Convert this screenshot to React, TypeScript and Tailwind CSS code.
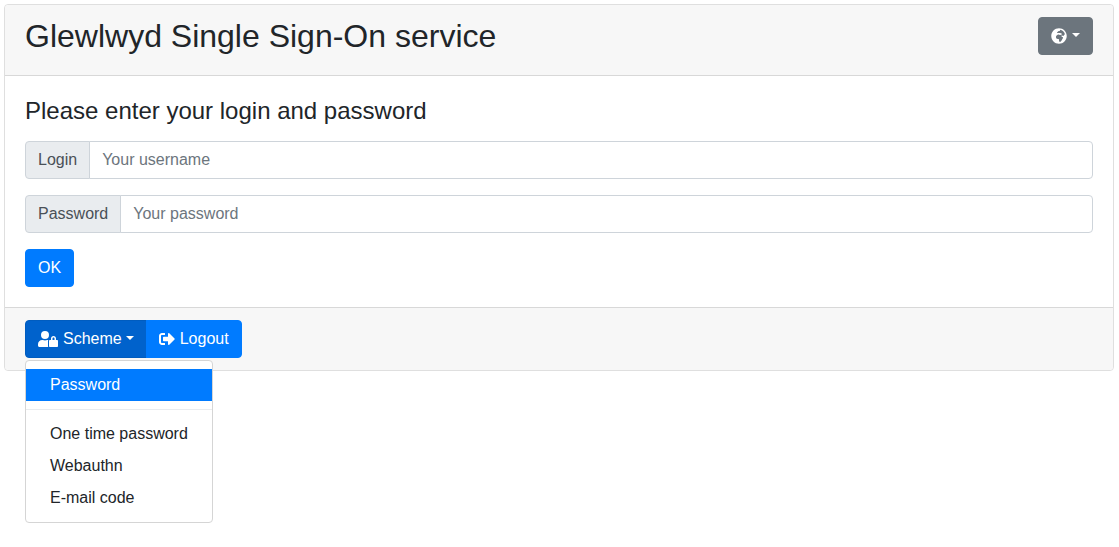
import React from "react";
import { FaGlobeAfrica, FaSignOutAlt } from "react-icons/fa";

function UserLockIcon({ className }: { className?: string }) {
  return (
    <svg viewBox="0 0 640 512" fill="currentColor" className={className} aria-hidden="true">
      <path d="M224 256A128 128 0 1 0 224 0a128 128 0 1 0 0 256zm96 64c0-11.1 3.1-21.4 8.1-30.5-4.8-.5-9.5-1.5-14.5-1.5h-16.7c-22.2 10.2-46.9 16-72.9 16s-50.6-5.8-72.9-16h-16.7C60.2 288 0 348.2 0 422.4V464c0 26.5 21.5 48 48 48h280.9c-5.5-9.5-8.9-20.3-8.9-32V320z" />
      <path
        fillRule="evenodd"
        d="M608 288h-32v-48c0-44.1-35.9-80-80-80s-80 35.9-80 80v48h-32c-17.7 0-32 14.3-32 32v160c0 17.7 14.3 32 32 32h224c17.7 0 32-14.3 32-32V320c0-17.7-14.3-32-32-32zm-80 0h-64v-48c0-17.6 14.4-32 32-32s32 14.4 32 32v48z"
      />
    </svg>
  );
}

function Caret({ className }: { className: string }) {
  return (
    <span
      className={`mb-0.5 inline-block border-x-4 border-t-4 border-x-transparent border-t-current ${className}`}
      aria-hidden="true"
    />
  );
}

type FieldProps = { id: string; label: string; placeholder: string; type: string };

function Field({ id, label, placeholder, type }: FieldProps) {
  return (
    <div className="mb-4 flex w-full">
      <label
        htmlFor={id}
        className="flex items-center rounded-l border border-[#ced4da] bg-[#e9ecef] px-3 py-1.5 text-[#495057]"
      >
        {label}
      </label>
      <input
        id={id}
        type={type}
        placeholder={placeholder}
        className="-ml-px min-w-0 flex-1 rounded-r border border-[#ced4da] bg-white px-3 py-1.5 text-[#495057] placeholder:text-[#6c757d] focus:outline-none focus:ring-2 focus:ring-[#80bdff]"
      />
    </div>
  );
}

const otherSchemes = ["One time password", "Webauthn", "E-mail code"];

export default function App() {
  return (
    <main className="min-h-screen p-1 pr-[5px] font-['Liberation_Sans',Arial,sans-serif] text-base text-[#212529]">
      <div className="rounded border border-[#dfdfdf] bg-white">
        <header className="flex items-start justify-between rounded-t border-b border-[#d8d8d8] bg-[#f7f7f7] px-5 py-3">
          <h1 className="mb-2 text-[32px] leading-[38px]">Glewlwyd Single Sign-On service</h1>
          <button
            type="button"
            aria-label="Language"
            className="flex items-center rounded border border-[#6c757d] bg-[#6c757d] px-3 py-1.5 text-white"
          >
            <FaGlobeAfrica className="my-1 size-4" />
            <Caret className="ml-[5px]" />
          </button>
        </header>

        <form className="p-5" onSubmit={(e) => e.preventDefault()}>
          <h2 className="mb-4 text-2xl leading-[29px]">Please enter your login and password</h2>
          <Field id="username" label="Login" placeholder="Your username" type="text" />
          <Field id="password" label="Password" placeholder="Your password" type="password" />
          <button type="submit" className="rounded border border-[#007bff] bg-[#007bff] px-3 py-1.5 text-white">
            OK
          </button>
        </form>

        <footer className="rounded-b border-t border-[#d8d8d8] bg-[#f7f7f7] px-5 py-3">
          <div className="relative flex">
            <button
              type="button"
              aria-haspopup="menu"
              aria-expanded="true"
              className="flex items-center rounded-l border border-[#005cbf] bg-[#0062cc] px-3 py-1.5 text-white"
            >
              <UserLockIcon className="mr-[5px] h-4 w-5" />
              Scheme
              <Caret className="ml-1" />
            </button>
            <button
              type="button"
              className="-ml-px flex items-center rounded-r border border-[#007bff] bg-[#007bff] px-3 py-1.5 text-white"
            >
              <FaSignOutAlt className="mr-[5px] size-4" />
              Logout
            </button>
            <div
              role="menu"
              className="absolute top-full left-0 z-10 mt-0.5 rounded border border-[#d5d5d5] bg-white py-2 whitespace-nowrap"
            >
              <a role="menuitem" href="#password" className="block bg-[#007bff] px-6 py-1 text-white">
                Password
              </a>
              <div className="my-2 border-t border-[#e9ecef]" />
              {otherSchemes.map((scheme) => (
                <a key={scheme} role="menuitem" href="#scheme" className="block px-6 py-1">
                  {scheme}
                </a>
              ))}
            </div>
          </div>
        </footer>
      </div>
    </main>
  );
}
